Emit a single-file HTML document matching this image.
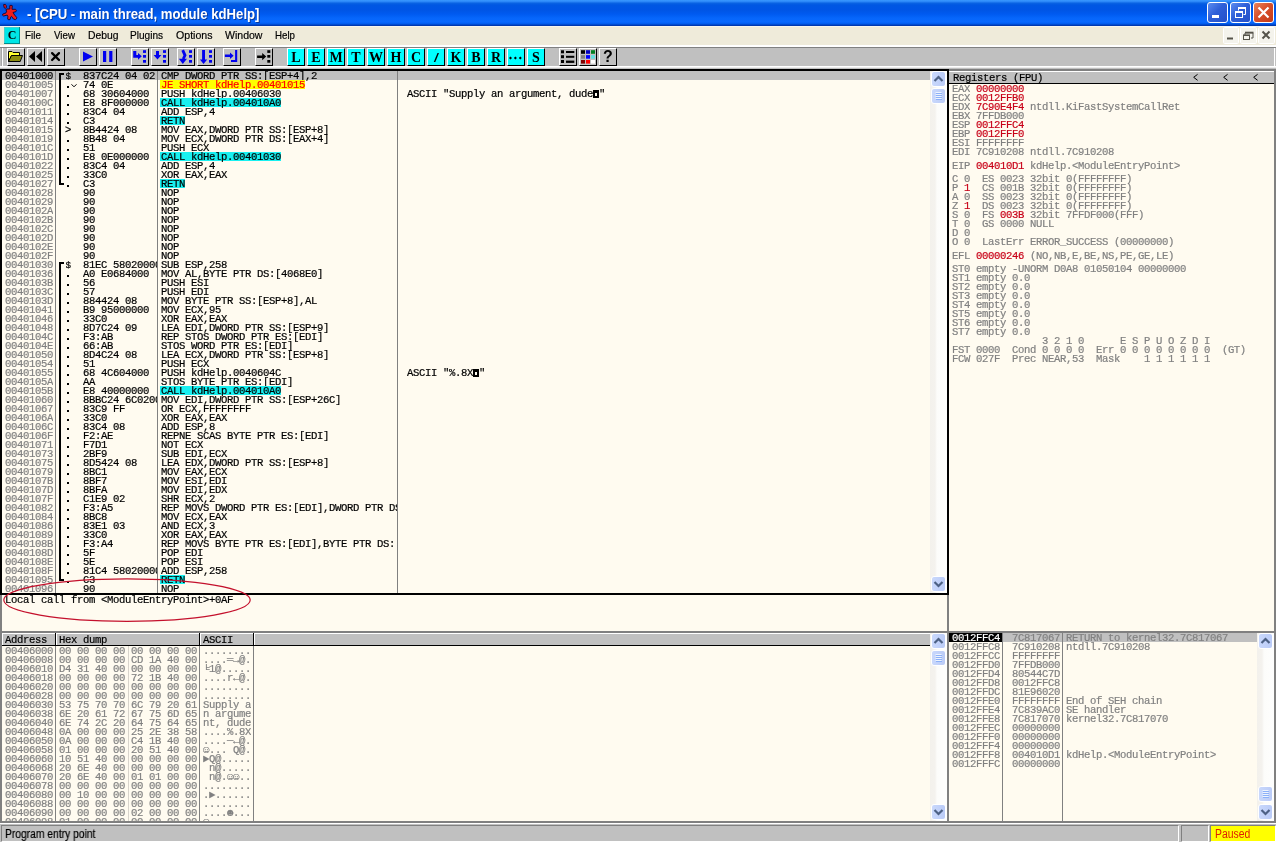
<!DOCTYPE html>
<html><head><meta charset="utf-8"><title>OllyDbg</title>
<style>
html,body{margin:0;padding:0;overflow:hidden;}
body{width:1276px;height:842px;overflow:hidden;background:#FFFBF0;position:relative;font-family:"Liberation Sans",sans-serif;}
.a{position:absolute;}
.m{position:absolute;font-family:"Liberation Mono",monospace;font-size:10.6px;letter-spacing:-0.36px;line-height:11px;height:11px;white-space:pre;color:#000;overflow:hidden;-webkit-text-stroke:0.2px;}
.g{color:#808080;}
.rd{color:#C80018;}
.tbb{position:absolute;top:48px;width:16px;height:16px;background:#C0C0C0;border:1px solid;border-color:#fff #000 #000 #fff;}
.tbc{background:#00FFFF;font-family:"Liberation Serif",serif;font-weight:bold;font-size:14px;line-height:18px;text-align:center;color:#000;overflow:hidden;}
.mi{position:absolute;top:28px;font-size:11px;line-height:14px;color:#000;white-space:pre;transform-origin:0 0;-webkit-text-stroke:0.2px;}
.sb{position:absolute;width:17px;background:linear-gradient(to right,#F3F1EC 0,#F4F2EE 5px,#FCFCFA 7px,#FEFEFD 17px);}
.sbb{position:absolute;left:1px;width:13px;height:14px;border:1px solid #fff;border-radius:3px;background:linear-gradient(to right,#C9D8FC,#BACBF7);overflow:hidden;}
</style></head><body><div id="root" style="position:absolute;left:0;top:0;width:1276px;height:842px;will-change:transform;">

<div class="a" style="left:0;top:0;width:1276px;height:26px;background:linear-gradient(to bottom,#3A99FF 0px,#2C88F8 1.5px,#0A63E3 3.2px,#0057E3 5px,#0055E5 10px,#005AF0 14px,#0666FB 18px,#0868FF 22px,#0059EA 24px,#0038B0 25.2px,#0038B0 26px);"></div>
<svg class="a" style="left:0;top:0" width="20" height="23" viewBox="0 0 20 23">
<g fill="#F01C1C" stroke="#1C0838" stroke-width="1" stroke-linejoin="round">
<path d="M3.6 4.6 Q5.4 3.8 6.2 5.4 L6.4 7.6 Q5.4 8.8 4.2 7.8 Z"/>
<path d="M9.8 5.6 Q11 4.8 12.3 5.7 L12 9.3 L15.6 9.3 Q17 10.2 16 11.6 L13 12.5 L14.6 15 L16.7 17.4 Q17 19.2 15.4 19.6 L13.4 19 L11.5 16.3 L10.6 17.2 L10.2 19.4 Q9 20.4 7.7 19.2 L7.9 16.2 L7.2 15.1 L3.6 16 Q1.8 15.4 2.8 14 L6 12.9 L6.6 11.2 L5.9 9.7 L7 9 L9.8 9 Z"/>
</g></svg>
<div class="a" style="left:27px;top:4.6px;font-weight:bold;font-size:14.5px;line-height:18px;color:#fff;white-space:pre;text-shadow:1px 1px 0 #0A3A9C;transform-origin:0 0;transform:scaleX(0.9075);" id="ttl">- [CPU - main thread, module kdHelp]</div>
<div class="a" style="left:1207px;top:2px;width:19px;height:19px;border:1px solid #fff;border-radius:3px;background:linear-gradient(135deg,#5C8CF0 0%,#2E5FD8 45%,#2450C8 100%);"></div><div class="a" style="left:1212px;top:15px;width:7px;height:3px;background:#fff;"></div>
<div class="a" style="left:1230px;top:2px;width:19px;height:19px;border:1px solid #fff;border-radius:3px;background:linear-gradient(135deg,#5C8CF0 0%,#2E5FD8 45%,#2450C8 100%);"></div><svg class="a" style="left:1230px;top:2px" width="21" height="21"><path d="M8.5 8.5 V6.5 H15.5 V12.5 H13.5" fill="none" stroke="#fff" stroke-width="1"/><path d="M8 6 H16" stroke="#fff" stroke-width="2"/><rect x="5.5" y="10.5" width="7" height="5" fill="none" stroke="#fff" stroke-width="1"/><path d="M5 10 H13" stroke="#fff" stroke-width="2"/></svg>
<div class="a" style="left:1253px;top:2px;width:19px;height:19px;border:1px solid #fff;border-radius:3px;background:linear-gradient(135deg,#E8845C 0%,#D8502C 45%,#C23A18 100%);"></div><svg class="a" style="left:1253px;top:2px" width="21" height="21"><path d="M5.5 5.5 L15.5 15.5 M15.5 5.5 L5.5 15.5" stroke="#fff" stroke-width="2.2"/></svg>
<div class="a" style="left:0;top:26px;width:1276px;height:21px;background:#EFEBDA;"></div>
<div class="a" style="left:0px;top:26px;width:1276px;height:1px;background:#F6F5EE"></div>
<div class="a" style="left:0px;top:45px;width:1276px;height:2px;background:#FFFFFF"></div>
<div class="a" style="left:4px;top:27px;width:15px;height:16px;background:#00E6E6;border:solid #008C8C;border-width:0 1px 1px 0;box-shadow:inset 1px 1px 0 #40d0d0;"></div>
<div class="a" style="left:4px;top:27px;width:16px;height:17px;font-family:'Liberation Serif',serif;font-weight:bold;font-size:12px;line-height:17px;text-align:center;color:#000;">C</div>
<div class="mi" style="left:25px;transform:scaleX(0.902)">File</div>
<div class="mi" style="left:54px;transform:scaleX(0.888)">View</div>
<div class="mi" style="left:88px;transform:scaleX(0.941)">Debug</div>
<div class="mi" style="left:130px;transform:scaleX(0.915)">Plugins</div>
<div class="mi" style="left:175.5px;transform:scaleX(0.963)">Options</div>
<div class="mi" style="left:224.5px;transform:scaleX(0.958)">Window</div>
<div class="mi" style="left:274.5px;transform:scaleX(0.884)">Help</div>
<svg class="a" style="left:1222px;top:27px" width="54" height="18">
<g fill="#F4F3EC" stroke="#fff" stroke-width="1"><rect x="1.5" y="0.5" width="15" height="16" rx="1"/><rect x="18.5" y="0.5" width="16" height="16" rx="1"/><rect x="36.5" y="0.5" width="16" height="16" rx="1"/></g>
<path d="M5 11.5 H11" stroke="#55534A" stroke-width="2"/>
<path d="M23 8 V6 H31 V11 H29" fill="none" stroke="#55534A" stroke-width="1"/><path d="M23 5.5 H31.5" stroke="#55534A" stroke-width="1.6"/>
<rect x="21.5" y="8.5" width="6" height="4" fill="none" stroke="#55534A" stroke-width="1"/><path d="M21 8.2 H28" stroke="#55534A" stroke-width="1.6"/>
<path d="M40.5 4.5 L47.5 11.5 M47.5 4.5 L40.5 11.5" stroke="#55534A" stroke-width="2"/>
</svg>
<div class="a" style="left:0;top:47px;width:1276px;height:22px;background:#C0C0C0;"></div>
<div class="a" style="left:0px;top:47px;width:1276px;height:1px;background:#808080"></div>
<div class="a" style="left:1px;top:48px;width:1px;height:18px;background:#A8A8A8"></div>
<div class="a" style="left:2px;top:48px;width:1px;height:18px;background:#FFFFFF"></div>
<div class="a" style="left:1274px;top:48px;width:1px;height:18px;background:#fff"></div>
<div class="a" style="left:0px;top:66px;width:1276px;height:1px;background:#fff"></div>
<div class="a" style="left:0px;top:67px;width:1276px;height:1px;background:#ECECEC"></div>
<div class="tbb " style="left:7px"><svg width="16" height="16" viewBox="0 0 16 16" style="display:block"><path d="M0.5 2.5 H4 L5 3.5 H11.5 V6.5 H3.5 L0.5 12.5 Z" fill="#FFFF30" stroke="#000" stroke-width="1"/><path d="M0.5 12.5 L3.5 6.5 H14.5 L12.2 12.5 Z" fill="#8C8C10" stroke="#000" stroke-width="1"/></svg></div>
<div class="tbb " style="left:27px"><svg width="16" height="16" viewBox="0 0 16 16" style="display:block"><path d="M7 2 V13 L1 7.5 Z M14 2 V13 L8 7.5 Z" fill="#000"/></svg></div>
<div class="tbb " style="left:47px"><svg width="16" height="16" viewBox="0 0 16 16" style="display:block"><path d="M4.1 4.1 L11 11 M11 4.1 L4.1 11" stroke="#000" stroke-width="2.3" stroke-linecap="round"/></svg></div>
<div class="tbb " style="left:79px"><svg width="16" height="16" viewBox="0 0 16 16" style="display:block"><path d="M3 2.5 L13 7.5 L3 12.5 Z" fill="#0000F0"/></svg></div>
<div class="tbb " style="left:99px"><svg width="16" height="16" viewBox="0 0 16 16" style="display:block"><rect x="3" y="2" width="3.2" height="11" fill="#0000F0"/><rect x="9.2" y="2" width="3.2" height="11" fill="#0000F0"/></svg></div>
<div class="tbb " style="left:131px"><svg width="16" height="16" viewBox="0 0 16 16" style="display:block"><path d="M1.2 2 H4.3 V6 H6 V4 L9.8 7.35 L6 10.7 V8.7 H1.2 Z" fill="#0000F0"/><rect x="11" y="1.2" width="3" height="2.7" fill="#0000F0"/><rect x="11" y="6" width="3" height="2.7" fill="#0000F0"/><rect x="11" y="11" width="3" height="2.7" fill="#0000F0"/></svg></div>
<div class="tbb " style="left:151px"><svg width="16" height="16" viewBox="0 0 16 16" style="display:block"><path d="M4 2 H7 V6 H9.4 L5.5 10.4 L1.6 6 H4 Z" fill="#0000F0"/><rect x="11" y="1.2" width="3" height="2.7" fill="#0000F0"/><rect x="11" y="6" width="3" height="2.7" fill="#0000F0"/><rect x="11" y="11" width="3" height="2.7" fill="#0000F0"/></svg></div>
<div class="tbb " style="left:177px"><svg width="16" height="16" viewBox="0 0 16 16" style="display:block"><path d="M4.7 1.2 L7 6.3 L5.2 10" fill="none" stroke="#0000F0" stroke-width="2.8"/><path d="M0.9 9.8 H9 L4.8 15 Z" fill="#0000F0"/><rect x="11" y="1.2" width="3" height="2.7" fill="#0000F0"/><rect x="11" y="6" width="3" height="2.7" fill="#0000F0"/><rect x="11" y="11" width="3" height="2.7" fill="#0000F0"/></svg></div>
<div class="tbb " style="left:197px"><svg width="16" height="16" viewBox="0 0 16 16" style="display:block"><path d="M4.1 1.1 H7 V10.6 H9.2 L5.55 15 L1.9 10.6 H4.1 Z" fill="#0000F0"/><rect x="11" y="1.2" width="3" height="2.7" fill="#0000F0"/><rect x="11" y="6" width="3" height="2.7" fill="#0000F0"/><rect x="11" y="11" width="3" height="2.7" fill="#0000F0"/></svg></div>
<div class="tbb " style="left:223px"><svg width="16" height="16" viewBox="0 0 16 16" style="display:block"><path d="M0.9 5.6 H6 V3.5 L9.6 6.8 L6 10.1 V8 H0.9 Z" fill="#0000F0"/><path d="M11.1 1.1 H13.2 V12.9 H7 V10.9 H11.1 Z" fill="#0000F0"/></svg></div>
<div class="tbb " style="left:255px"><svg width="16" height="16" viewBox="0 0 16 16" style="display:block"><path d="M1.1 6.4 H6.2 V4 L10.2 7.6 L6.2 11.2 V8.9 H1.1 Z" fill="#000"/><rect x="11.3" y="1.2" width="3" height="2.7" fill="#000"/><rect x="11.3" y="6" width="3" height="2.7" fill="#000"/><rect x="11.3" y="11" width="3" height="2.7" fill="#000"/></svg></div>
<div class="tbb tbc" style="left:287px"><span>L</span></div>
<div class="tbb tbc" style="left:307px"><span>E</span></div>
<div class="tbb tbc" style="left:327px"><span>M</span></div>
<div class="tbb tbc" style="left:347px"><span>T</span></div>
<div class="tbb tbc" style="left:367px"><span>W</span></div>
<div class="tbb tbc" style="left:387px"><span>H</span></div>
<div class="tbb tbc" style="left:407px"><span>C</span></div>
<div class="tbb tbc" style="left:427px"><span><i style="font-size:13px;font-family:Liberation Sans;font-weight:bold">/</i></span></div>
<div class="tbb tbc" style="left:447px"><span>K</span></div>
<div class="tbb tbc" style="left:467px"><span>B</span></div>
<div class="tbb tbc" style="left:487px"><span>R</span></div>
<div class="tbb tbc" style="left:507px"><svg width="16" height="16" viewBox="0 0 16 16" style="display:block"><g fill="#000"><path d="M2.5 7.5 L4 9 L2.5 10.5 L1 9 Z M7.4 7.5 L8.9 9 L7.4 10.5 L5.9 9 Z M12.3 7.5 L13.8 9 L12.3 10.5 L10.8 9 Z"/></g></svg></div>
<div class="tbb tbc" style="left:527px"><span>S</span></div>
<div class="tbb " style="left:559px"><svg width="16" height="16" viewBox="0 0 16 16" style="display:block"><g fill="#000"><rect x="1" y="1.3" width="3" height="3"/><rect x="1" y="6.2" width="3" height="3"/><rect x="1" y="11" width="3" height="3"/><rect x="6" y="2" width="8.3" height="2"/><rect x="6" y="6.8" width="8.3" height="2"/><rect x="6" y="11.6" width="8.3" height="2.3"/></g></svg></div>
<div class="tbb " style="left:579px"><svg width="16" height="16" viewBox="0 0 16 16" style="display:block"><rect x="1" y="1.2" width="4" height="3.6" fill="#000"/><rect x="6" y="1.2" width="4" height="3.6" fill="#0000C0"/><rect x="11" y="1.2" width="4" height="3.6" fill="#008020"/><rect x="1" y="6.1" width="4" height="3.6" fill="#808080"/><rect x="6" y="6.1" width="4" height="3.6" fill="#0000FF"/><rect x="11" y="6.1" width="4" height="3.6" fill="#60E0E0"/><rect x="1" y="11" width="4" height="3.6" fill="#800000"/><rect x="6" y="11" width="4" height="3.6" fill="#FF0000"/><rect x="11" y="11" width="4" height="3.6" fill="#fff"/></svg></div>
<div class="tbb " style="left:599px"><div style="font-weight:bold;font-size:16px;line-height:16px;text-align:center;color:#000">?</div></div>
<div class="a" style="left:0px;top:69px;width:949px;height:526px;background:#000"></div>
<div class="a" style="left:2px;top:71px;width:945px;height:522px;background:#FFFBF0"></div>
<div class="a" style="left:2px;top:71px;width:928px;height:9px;background:#C0C0C0"></div>
<div class="m " style="left:5px;top:71px;">00401000</div>
<div class="m " style="left:65.5px;top:71px;font-size:9.2px;letter-spacing:0;">$</div>
<div class="m " style="left:83px;top:71px;width:74px;">837C24 04 02</div>
<div class="m " style="left:161px;top:71px;width:236px;">CMP DWORD PTR SS:[ESP+4],2</div>
<div class="m g" style="left:5px;top:80px;">00401005</div>
<div class="a" style="left:67px;top:86px;width:2px;height:2px;background:#000"></div>
<svg class="a" style="left:71px;top:80px" width="6" height="9"><path d="M0.5 4.3 L3 6.8 L5.5 4.3" fill="none" stroke="#000" stroke-width="1"/></svg>
<div class="m " style="left:83px;top:80px;width:74px;">74 0E</div>
<div class="a" style="left:160px;top:80px;width:145px;height:9px;background:#FFFF00"></div>
<div class="m " style="left:161px;top:80px;width:236px;color:#FF0000;">JE SHORT kdHelp.00401015</div>
<div class="m g" style="left:5px;top:89px;">00401007</div>
<div class="a" style="left:67px;top:95px;width:2px;height:2px;background:#000"></div>
<div class="m " style="left:83px;top:89px;width:74px;">68 30604000</div>
<div class="m " style="left:161px;top:89px;width:236px;">PUSH kdHelp.00406030</div>
<div class="m " style="left:407px;top:89px;">ASCII &quot;Supply an argument, dude &quot;</div>
<div class="a" style="left:593px;top:90px;width:6px;height:8px;background:#000"></div>
<div class="a" style="left:595px;top:93px;width:2px;height:3px;background:#FFFBF0"></div>
<div class="m g" style="left:5px;top:98px;">0040100C</div>
<div class="a" style="left:67px;top:104px;width:2px;height:2px;background:#000"></div>
<div class="m " style="left:83px;top:98px;width:74px;">E8 8F000000</div>
<div class="a" style="left:160px;top:98px;width:121px;height:9px;background:#18F0F0"></div>
<div class="m " style="left:161px;top:98px;width:236px;">CALL kdHelp.004010A0</div>
<div class="m g" style="left:5px;top:107px;">00401011</div>
<div class="a" style="left:67px;top:113px;width:2px;height:2px;background:#000"></div>
<div class="m " style="left:83px;top:107px;width:74px;">83C4 04</div>
<div class="m " style="left:161px;top:107px;width:236px;">ADD ESP,4</div>
<div class="m g" style="left:5px;top:116px;">00401014</div>
<div class="a" style="left:67px;top:122px;width:2px;height:2px;background:#000"></div>
<div class="m " style="left:83px;top:116px;width:74px;">C3</div>
<div class="a" style="left:160px;top:116px;width:25px;height:9px;background:#18F0F0"></div>
<div class="m " style="left:161px;top:116px;width:236px;">RETN</div>
<div class="m g" style="left:5px;top:125px;">00401015</div>
<div class="m " style="left:65px;top:125px;">&gt;</div>
<div class="m " style="left:83px;top:125px;width:74px;">8B4424 08</div>
<div class="m " style="left:161px;top:125px;width:236px;">MOV EAX,DWORD PTR SS:[ESP+8]</div>
<div class="m g" style="left:5px;top:134px;">00401019</div>
<div class="a" style="left:67px;top:140px;width:2px;height:2px;background:#000"></div>
<div class="m " style="left:83px;top:134px;width:74px;">8B48 04</div>
<div class="m " style="left:161px;top:134px;width:236px;">MOV ECX,DWORD PTR DS:[EAX+4]</div>
<div class="m g" style="left:5px;top:143px;">0040101C</div>
<div class="a" style="left:67px;top:149px;width:2px;height:2px;background:#000"></div>
<div class="m " style="left:83px;top:143px;width:74px;">51</div>
<div class="m " style="left:161px;top:143px;width:236px;">PUSH ECX</div>
<div class="m g" style="left:5px;top:152px;">0040101D</div>
<div class="a" style="left:67px;top:158px;width:2px;height:2px;background:#000"></div>
<div class="m " style="left:83px;top:152px;width:74px;">E8 0E000000</div>
<div class="a" style="left:160px;top:152px;width:121px;height:9px;background:#18F0F0"></div>
<div class="m " style="left:161px;top:152px;width:236px;">CALL kdHelp.00401030</div>
<div class="m g" style="left:5px;top:161px;">00401022</div>
<div class="a" style="left:67px;top:167px;width:2px;height:2px;background:#000"></div>
<div class="m " style="left:83px;top:161px;width:74px;">83C4 04</div>
<div class="m " style="left:161px;top:161px;width:236px;">ADD ESP,4</div>
<div class="m g" style="left:5px;top:170px;">00401025</div>
<div class="a" style="left:67px;top:176px;width:2px;height:2px;background:#000"></div>
<div class="m " style="left:83px;top:170px;width:74px;">33C0</div>
<div class="m " style="left:161px;top:170px;width:236px;">XOR EAX,EAX</div>
<div class="m g" style="left:5px;top:179px;">00401027</div>
<div class="a" style="left:67px;top:185px;width:2px;height:2px;background:#000"></div>
<div class="m " style="left:83px;top:179px;width:74px;">C3</div>
<div class="a" style="left:160px;top:179px;width:25px;height:9px;background:#18F0F0"></div>
<div class="m " style="left:161px;top:179px;width:236px;">RETN</div>
<div class="m g" style="left:5px;top:188px;">00401028</div>
<div class="m " style="left:83px;top:188px;width:74px;">90</div>
<div class="m " style="left:161px;top:188px;width:236px;">NOP</div>
<div class="m g" style="left:5px;top:197px;">00401029</div>
<div class="m " style="left:83px;top:197px;width:74px;">90</div>
<div class="m " style="left:161px;top:197px;width:236px;">NOP</div>
<div class="m g" style="left:5px;top:206px;">0040102A</div>
<div class="m " style="left:83px;top:206px;width:74px;">90</div>
<div class="m " style="left:161px;top:206px;width:236px;">NOP</div>
<div class="m g" style="left:5px;top:215px;">0040102B</div>
<div class="m " style="left:83px;top:215px;width:74px;">90</div>
<div class="m " style="left:161px;top:215px;width:236px;">NOP</div>
<div class="m g" style="left:5px;top:224px;">0040102C</div>
<div class="m " style="left:83px;top:224px;width:74px;">90</div>
<div class="m " style="left:161px;top:224px;width:236px;">NOP</div>
<div class="m g" style="left:5px;top:233px;">0040102D</div>
<div class="m " style="left:83px;top:233px;width:74px;">90</div>
<div class="m " style="left:161px;top:233px;width:236px;">NOP</div>
<div class="m g" style="left:5px;top:242px;">0040102E</div>
<div class="m " style="left:83px;top:242px;width:74px;">90</div>
<div class="m " style="left:161px;top:242px;width:236px;">NOP</div>
<div class="m g" style="left:5px;top:251px;">0040102F</div>
<div class="m " style="left:83px;top:251px;width:74px;">90</div>
<div class="m " style="left:161px;top:251px;width:236px;">NOP</div>
<div class="m g" style="left:5px;top:260px;">00401030</div>
<div class="m " style="left:65.5px;top:260px;font-size:9.2px;letter-spacing:0;">$</div>
<div class="m " style="left:83px;top:260px;width:74px;">81EC 58020000</div>
<div class="m " style="left:161px;top:260px;width:236px;">SUB ESP,258</div>
<div class="m g" style="left:5px;top:269px;">00401036</div>
<div class="a" style="left:67px;top:275px;width:2px;height:2px;background:#000"></div>
<div class="m " style="left:83px;top:269px;width:74px;">A0 E0684000</div>
<div class="m " style="left:161px;top:269px;width:236px;">MOV AL,BYTE PTR DS:[4068E0]</div>
<div class="m g" style="left:5px;top:278px;">0040103B</div>
<div class="a" style="left:67px;top:284px;width:2px;height:2px;background:#000"></div>
<div class="m " style="left:83px;top:278px;width:74px;">56</div>
<div class="m " style="left:161px;top:278px;width:236px;">PUSH ESI</div>
<div class="m g" style="left:5px;top:287px;">0040103C</div>
<div class="a" style="left:67px;top:293px;width:2px;height:2px;background:#000"></div>
<div class="m " style="left:83px;top:287px;width:74px;">57</div>
<div class="m " style="left:161px;top:287px;width:236px;">PUSH EDI</div>
<div class="m g" style="left:5px;top:296px;">0040103D</div>
<div class="a" style="left:67px;top:302px;width:2px;height:2px;background:#000"></div>
<div class="m " style="left:83px;top:296px;width:74px;">884424 08</div>
<div class="m " style="left:161px;top:296px;width:236px;">MOV BYTE PTR SS:[ESP+8],AL</div>
<div class="m g" style="left:5px;top:305px;">00401041</div>
<div class="a" style="left:67px;top:311px;width:2px;height:2px;background:#000"></div>
<div class="m " style="left:83px;top:305px;width:74px;">B9 95000000</div>
<div class="m " style="left:161px;top:305px;width:236px;">MOV ECX,95</div>
<div class="m g" style="left:5px;top:314px;">00401046</div>
<div class="a" style="left:67px;top:320px;width:2px;height:2px;background:#000"></div>
<div class="m " style="left:83px;top:314px;width:74px;">33C0</div>
<div class="m " style="left:161px;top:314px;width:236px;">XOR EAX,EAX</div>
<div class="m g" style="left:5px;top:323px;">00401048</div>
<div class="a" style="left:67px;top:329px;width:2px;height:2px;background:#000"></div>
<div class="m " style="left:83px;top:323px;width:74px;">8D7C24 09</div>
<div class="m " style="left:161px;top:323px;width:236px;">LEA EDI,DWORD PTR SS:[ESP+9]</div>
<div class="m g" style="left:5px;top:332px;">0040104C</div>
<div class="a" style="left:67px;top:338px;width:2px;height:2px;background:#000"></div>
<div class="m " style="left:83px;top:332px;width:74px;">F3:AB</div>
<div class="m " style="left:161px;top:332px;width:236px;">REP STOS DWORD PTR ES:[EDI]</div>
<div class="m g" style="left:5px;top:341px;">0040104E</div>
<div class="a" style="left:67px;top:347px;width:2px;height:2px;background:#000"></div>
<div class="m " style="left:83px;top:341px;width:74px;">66:AB</div>
<div class="m " style="left:161px;top:341px;width:236px;">STOS WORD PTR ES:[EDI]</div>
<div class="m g" style="left:5px;top:350px;">00401050</div>
<div class="a" style="left:67px;top:356px;width:2px;height:2px;background:#000"></div>
<div class="m " style="left:83px;top:350px;width:74px;">8D4C24 08</div>
<div class="m " style="left:161px;top:350px;width:236px;">LEA ECX,DWORD PTR SS:[ESP+8]</div>
<div class="m g" style="left:5px;top:359px;">00401054</div>
<div class="a" style="left:67px;top:365px;width:2px;height:2px;background:#000"></div>
<div class="m " style="left:83px;top:359px;width:74px;">51</div>
<div class="m " style="left:161px;top:359px;width:236px;">PUSH ECX</div>
<div class="m g" style="left:5px;top:368px;">00401055</div>
<div class="a" style="left:67px;top:374px;width:2px;height:2px;background:#000"></div>
<div class="m " style="left:83px;top:368px;width:74px;">68 4C604000</div>
<div class="m " style="left:161px;top:368px;width:236px;">PUSH kdHelp.0040604C</div>
<div class="m " style="left:407px;top:368px;">ASCII &quot;%.8X &quot;</div>
<div class="a" style="left:473px;top:369px;width:6px;height:8px;background:#000"></div>
<div class="a" style="left:475px;top:372px;width:2px;height:3px;background:#FFFBF0"></div>
<div class="m g" style="left:5px;top:377px;">0040105A</div>
<div class="a" style="left:67px;top:383px;width:2px;height:2px;background:#000"></div>
<div class="m " style="left:83px;top:377px;width:74px;">AA</div>
<div class="m " style="left:161px;top:377px;width:236px;">STOS BYTE PTR ES:[EDI]</div>
<div class="m g" style="left:5px;top:386px;">0040105B</div>
<div class="a" style="left:67px;top:392px;width:2px;height:2px;background:#000"></div>
<div class="m " style="left:83px;top:386px;width:74px;">E8 40000000</div>
<div class="a" style="left:160px;top:386px;width:121px;height:9px;background:#18F0F0"></div>
<div class="m " style="left:161px;top:386px;width:236px;">CALL kdHelp.004010A0</div>
<div class="m g" style="left:5px;top:395px;">00401060</div>
<div class="a" style="left:67px;top:401px;width:2px;height:2px;background:#000"></div>
<div class="m " style="left:83px;top:395px;width:74px;">8BBC24 6C020000</div>
<div class="m " style="left:161px;top:395px;width:236px;">MOV EDI,DWORD PTR SS:[ESP+26C]</div>
<div class="m g" style="left:5px;top:404px;">00401067</div>
<div class="a" style="left:67px;top:410px;width:2px;height:2px;background:#000"></div>
<div class="m " style="left:83px;top:404px;width:74px;">83C9 FF</div>
<div class="m " style="left:161px;top:404px;width:236px;">OR ECX,FFFFFFFF</div>
<div class="m g" style="left:5px;top:413px;">0040106A</div>
<div class="a" style="left:67px;top:419px;width:2px;height:2px;background:#000"></div>
<div class="m " style="left:83px;top:413px;width:74px;">33C0</div>
<div class="m " style="left:161px;top:413px;width:236px;">XOR EAX,EAX</div>
<div class="m g" style="left:5px;top:422px;">0040106C</div>
<div class="a" style="left:67px;top:428px;width:2px;height:2px;background:#000"></div>
<div class="m " style="left:83px;top:422px;width:74px;">83C4 08</div>
<div class="m " style="left:161px;top:422px;width:236px;">ADD ESP,8</div>
<div class="m g" style="left:5px;top:431px;">0040106F</div>
<div class="a" style="left:67px;top:437px;width:2px;height:2px;background:#000"></div>
<div class="m " style="left:83px;top:431px;width:74px;">F2:AE</div>
<div class="m " style="left:161px;top:431px;width:236px;">REPNE SCAS BYTE PTR ES:[EDI]</div>
<div class="m g" style="left:5px;top:440px;">00401071</div>
<div class="a" style="left:67px;top:446px;width:2px;height:2px;background:#000"></div>
<div class="m " style="left:83px;top:440px;width:74px;">F7D1</div>
<div class="m " style="left:161px;top:440px;width:236px;">NOT ECX</div>
<div class="m g" style="left:5px;top:449px;">00401073</div>
<div class="a" style="left:67px;top:455px;width:2px;height:2px;background:#000"></div>
<div class="m " style="left:83px;top:449px;width:74px;">2BF9</div>
<div class="m " style="left:161px;top:449px;width:236px;">SUB EDI,ECX</div>
<div class="m g" style="left:5px;top:458px;">00401075</div>
<div class="a" style="left:67px;top:464px;width:2px;height:2px;background:#000"></div>
<div class="m " style="left:83px;top:458px;width:74px;">8D5424 08</div>
<div class="m " style="left:161px;top:458px;width:236px;">LEA EDX,DWORD PTR SS:[ESP+8]</div>
<div class="m g" style="left:5px;top:467px;">00401079</div>
<div class="a" style="left:67px;top:473px;width:2px;height:2px;background:#000"></div>
<div class="m " style="left:83px;top:467px;width:74px;">8BC1</div>
<div class="m " style="left:161px;top:467px;width:236px;">MOV EAX,ECX</div>
<div class="m g" style="left:5px;top:476px;">0040107B</div>
<div class="a" style="left:67px;top:482px;width:2px;height:2px;background:#000"></div>
<div class="m " style="left:83px;top:476px;width:74px;">8BF7</div>
<div class="m " style="left:161px;top:476px;width:236px;">MOV ESI,EDI</div>
<div class="m g" style="left:5px;top:485px;">0040107D</div>
<div class="a" style="left:67px;top:491px;width:2px;height:2px;background:#000"></div>
<div class="m " style="left:83px;top:485px;width:74px;">8BFA</div>
<div class="m " style="left:161px;top:485px;width:236px;">MOV EDI,EDX</div>
<div class="m g" style="left:5px;top:494px;">0040107F</div>
<div class="a" style="left:67px;top:500px;width:2px;height:2px;background:#000"></div>
<div class="m " style="left:83px;top:494px;width:74px;">C1E9 02</div>
<div class="m " style="left:161px;top:494px;width:236px;">SHR ECX,2</div>
<div class="m g" style="left:5px;top:503px;">00401082</div>
<div class="a" style="left:67px;top:509px;width:2px;height:2px;background:#000"></div>
<div class="m " style="left:83px;top:503px;width:74px;">F3:A5</div>
<div class="m " style="left:161px;top:503px;width:236px;">REP MOVS DWORD PTR ES:[EDI],DWORD PTR DS:[ESI]</div>
<div class="m g" style="left:5px;top:512px;">00401084</div>
<div class="a" style="left:67px;top:518px;width:2px;height:2px;background:#000"></div>
<div class="m " style="left:83px;top:512px;width:74px;">8BC8</div>
<div class="m " style="left:161px;top:512px;width:236px;">MOV ECX,EAX</div>
<div class="m g" style="left:5px;top:521px;">00401086</div>
<div class="a" style="left:67px;top:527px;width:2px;height:2px;background:#000"></div>
<div class="m " style="left:83px;top:521px;width:74px;">83E1 03</div>
<div class="m " style="left:161px;top:521px;width:236px;">AND ECX,3</div>
<div class="m g" style="left:5px;top:530px;">00401089</div>
<div class="a" style="left:67px;top:536px;width:2px;height:2px;background:#000"></div>
<div class="m " style="left:83px;top:530px;width:74px;">33C0</div>
<div class="m " style="left:161px;top:530px;width:236px;">XOR EAX,EAX</div>
<div class="m g" style="left:5px;top:539px;">0040108B</div>
<div class="a" style="left:67px;top:545px;width:2px;height:2px;background:#000"></div>
<div class="m " style="left:83px;top:539px;width:74px;">F3:A4</div>
<div class="m " style="left:161px;top:539px;width:236px;">REP MOVS BYTE PTR ES:[EDI],BYTE PTR DS:[ESI]</div>
<div class="m g" style="left:5px;top:548px;">0040108D</div>
<div class="a" style="left:67px;top:554px;width:2px;height:2px;background:#000"></div>
<div class="m " style="left:83px;top:548px;width:74px;">5F</div>
<div class="m " style="left:161px;top:548px;width:236px;">POP EDI</div>
<div class="m g" style="left:5px;top:557px;">0040108E</div>
<div class="a" style="left:67px;top:563px;width:2px;height:2px;background:#000"></div>
<div class="m " style="left:83px;top:557px;width:74px;">5E</div>
<div class="m " style="left:161px;top:557px;width:236px;">POP ESI</div>
<div class="m g" style="left:5px;top:566px;">0040108F</div>
<div class="a" style="left:67px;top:572px;width:2px;height:2px;background:#000"></div>
<div class="m " style="left:83px;top:566px;width:74px;">81C4 58020000</div>
<div class="m " style="left:161px;top:566px;width:236px;">ADD ESP,258</div>
<div class="m g" style="left:5px;top:575px;">00401095</div>
<div class="a" style="left:67px;top:581px;width:2px;height:2px;background:#000"></div>
<div class="m " style="left:83px;top:575px;width:74px;">C3</div>
<div class="a" style="left:160px;top:575px;width:25px;height:9px;background:#18F0F0"></div>
<div class="m " style="left:161px;top:575px;width:236px;">RETN</div>
<div class="m g" style="left:5px;top:584px;">00401096</div>
<div class="m " style="left:83px;top:584px;width:74px;">90</div>
<div class="m " style="left:161px;top:584px;width:236px;">NOP</div>
<div class="a" style="left:55px;top:71px;width:1px;height:522px;background:#808080"></div>
<div class="a" style="left:157px;top:71px;width:1px;height:522px;background:#808080"></div>
<div class="a" style="left:397px;top:71px;width:1px;height:522px;background:#808080"></div>
<div class="a" style="left:59px;top:73px;width:2px;height:112px;background:#000"></div>
<div class="a" style="left:59px;top:73px;width:5px;height:2px;background:#000"></div>
<div class="a" style="left:59px;top:183px;width:5px;height:2px;background:#000"></div>
<div class="a" style="left:59px;top:262px;width:2px;height:319px;background:#000"></div>
<div class="a" style="left:59px;top:262px;width:5px;height:2px;background:#000"></div>
<div class="a" style="left:59px;top:579px;width:5px;height:2px;background:#000"></div>
<div class="sb" style="left:930px;top:71px;height:522px"><div class="sbb" style="top:0"><svg width="13" height="14" style="display:block"><path d="M2.5 9 L6.5 5 L10.5 9" fill="none" stroke="#4D6185" stroke-width="2.2"/></svg></div><div class="sbb" style="top:17px"><svg width="13" height="14" style="display:block"><path d="M3.5 3.5 H9.5 M3.5 5.5 H9.5 M3.5 7.5 H9.5 M3.5 9.5 H9.5" stroke="#EEF4FE" stroke-width="1"/><path d="M4 4.5 H10 M4 6.5 H10 M4 8.5 H10 M4 10.5 H10" stroke="#8CB0F8" stroke-width="1"/></svg></div><div class="sbb" style="top:505px"><svg width="13" height="14" style="display:block"><path d="M2.5 5 L6.5 9 L10.5 5" fill="none" stroke="#4D6185" stroke-width="2.2"/></svg></div></div>
<div class="a" style="left:0px;top:595px;width:2px;height:228px;background:#808080"></div>
<div class="a" style="left:947px;top:595px;width:2px;height:228px;background:#808080"></div>
<div class="m " style="left:5px;top:595px;">Local call from &lt;ModuleEntryPoint&gt;+0AF</div>
<div class="a" style="left:0px;top:631px;width:1276px;height:2px;background:#808080"></div>
<div class="a" style="left:2px;top:633px;width:928px;height:12px;background:#C0C0C0"></div>
<div class="a" style="left:2px;top:645px;width:928px;height:1px;background:#000"></div>
<div class="a" style="left:2px;top:633px;width:1px;height:12px;background:#fff"></div>
<div class="a" style="left:2px;top:633px;width:53px;height:1px;background:#fff"></div>
<div class="a" style="left:55px;top:633px;width:1px;height:13px;background:#000"></div>
<div class="m " style="left:5px;top:635px;">Address</div>
<div class="a" style="left:56px;top:633px;width:1px;height:12px;background:#fff"></div>
<div class="a" style="left:56px;top:633px;width:143px;height:1px;background:#fff"></div>
<div class="a" style="left:199px;top:633px;width:1px;height:13px;background:#000"></div>
<div class="m " style="left:59px;top:635px;">Hex dump</div>
<div class="a" style="left:200px;top:633px;width:1px;height:12px;background:#fff"></div>
<div class="a" style="left:200px;top:633px;width:53px;height:1px;background:#fff"></div>
<div class="a" style="left:253px;top:633px;width:1px;height:13px;background:#000"></div>
<div class="m " style="left:203px;top:635px;">ASCII</div>
<div class="a" style="left:254px;top:633px;width:1px;height:12px;background:#fff"></div>
<div class="a" style="left:254px;top:633px;width:676px;height:1px;background:#fff"></div>
<div class="a" style="left:930px;top:633px;width:1px;height:13px;background:#000"></div>
<div class="a" style="left:2px;top:646px;width:928px;height:175px;overflow:hidden">
<div class="m g" style="left:3px;top:0px;">00406000</div>
<div class="m g" style="left:57px;top:0px;">00 00 00 00 00 00 00 00</div>
<div class="m g" style="left:201px;top:0px;">........</div>
<div class="m g" style="left:3px;top:9px;">00406008</div>
<div class="m g" style="left:57px;top:9px;">00 00 00 00 CD 1A 40 00</div>
<div class="m g" style="left:201px;top:9px;">....═→@.</div>
<div class="m g" style="left:3px;top:18px;">00406010</div>
<div class="m g" style="left:57px;top:18px;">D4 31 40 00 00 00 00 00</div>
<div class="m g" style="left:201px;top:18px;">╘1@.....</div>
<div class="m g" style="left:3px;top:27px;">00406018</div>
<div class="m g" style="left:57px;top:27px;">00 00 00 00 72 1B 40 00</div>
<div class="m g" style="left:201px;top:27px;">....r←@.</div>
<div class="m g" style="left:3px;top:36px;">00406020</div>
<div class="m g" style="left:57px;top:36px;">00 00 00 00 00 00 00 00</div>
<div class="m g" style="left:201px;top:36px;">........</div>
<div class="m g" style="left:3px;top:45px;">00406028</div>
<div class="m g" style="left:57px;top:45px;">00 00 00 00 00 00 00 00</div>
<div class="m g" style="left:201px;top:45px;">........</div>
<div class="m g" style="left:3px;top:54px;">00406030</div>
<div class="m g" style="left:57px;top:54px;">53 75 70 70 6C 79 20 61</div>
<div class="m g" style="left:201px;top:54px;">Supply a</div>
<div class="m g" style="left:3px;top:63px;">00406038</div>
<div class="m g" style="left:57px;top:63px;">6E 20 61 72 67 75 6D 65</div>
<div class="m g" style="left:201px;top:63px;">n argume</div>
<div class="m g" style="left:3px;top:72px;">00406040</div>
<div class="m g" style="left:57px;top:72px;">6E 74 2C 20 64 75 64 65</div>
<div class="m g" style="left:201px;top:72px;">nt, dude</div>
<div class="m g" style="left:3px;top:81px;">00406048</div>
<div class="m g" style="left:57px;top:81px;">0A 00 00 00 25 2E 38 58</div>
<div class="m g" style="left:201px;top:81px;">....%.8X</div>
<div class="m g" style="left:3px;top:90px;">00406050</div>
<div class="m g" style="left:57px;top:90px;">0A 00 00 00 C4 1B 40 00</div>
<div class="m g" style="left:201px;top:90px;">....─←@.</div>
<div class="m g" style="left:3px;top:99px;">00406058</div>
<div class="m g" style="left:57px;top:99px;">01 00 00 00 20 51 40 00</div>
<div class="m g" style="left:201px;top:99px;">☺... Q@.</div>
<div class="m g" style="left:3px;top:108px;">00406060</div>
<div class="m g" style="left:57px;top:108px;">10 51 40 00 00 00 00 00</div>
<div class="m g" style="left:201px;top:108px;">►Q@.....</div>
<div class="m g" style="left:3px;top:117px;">00406068</div>
<div class="m g" style="left:57px;top:117px;">20 6E 40 00 00 00 00 00</div>
<div class="m g" style="left:201px;top:117px;"> n@.....</div>
<div class="m g" style="left:3px;top:126px;">00406070</div>
<div class="m g" style="left:57px;top:126px;">20 6E 40 00 01 01 00 00</div>
<div class="m g" style="left:201px;top:126px;"> n@.☺☺..</div>
<div class="m g" style="left:3px;top:135px;">00406078</div>
<div class="m g" style="left:57px;top:135px;">00 00 00 00 00 00 00 00</div>
<div class="m g" style="left:201px;top:135px;">........</div>
<div class="m g" style="left:3px;top:144px;">00406080</div>
<div class="m g" style="left:57px;top:144px;">00 10 00 00 00 00 00 00</div>
<div class="m g" style="left:201px;top:144px;">.►......</div>
<div class="m g" style="left:3px;top:153px;">00406088</div>
<div class="m g" style="left:57px;top:153px;">00 00 00 00 00 00 00 00</div>
<div class="m g" style="left:201px;top:153px;">........</div>
<div class="m g" style="left:3px;top:162px;">00406090</div>
<div class="m g" style="left:57px;top:162px;">00 00 00 00 02 00 00 00</div>
<div class="m g" style="left:201px;top:162px;">....☻...</div>
<div class="m g" style="left:3px;top:171px;">00406098</div>
<div class="m g" style="left:57px;top:171px;">01 00 00 00 00 00 00 00</div>
<div class="m g" style="left:201px;top:171px;">☺.......</div>
</div>
<div class="a" style="left:55px;top:646px;width:1px;height:175px;background:#808080"></div>
<div class="a" style="left:199px;top:646px;width:1px;height:175px;background:#808080"></div>
<div class="a" style="left:253px;top:646px;width:1px;height:175px;background:#808080"></div>
<div class="a" style="left:128px;top:646px;width:1px;height:175px;background:#D8D4CC"></div>
<div class="sb" style="left:930px;top:633px;height:188px"><div class="sbb" style="top:0"><svg width="13" height="14" style="display:block"><path d="M2.5 9 L6.5 5 L10.5 9" fill="none" stroke="#4D6185" stroke-width="2.2"/></svg></div><div class="sbb" style="top:17px"><svg width="13" height="14" style="display:block"><path d="M3.5 3.5 H9.5 M3.5 5.5 H9.5 M3.5 7.5 H9.5 M3.5 9.5 H9.5" stroke="#EEF4FE" stroke-width="1"/><path d="M4 4.5 H10 M4 6.5 H10 M4 8.5 H10 M4 10.5 H10" stroke="#8CB0F8" stroke-width="1"/></svg></div><div class="sbb" style="top:171px"><svg width="13" height="14" style="display:block"><path d="M2.5 5 L6.5 9 L10.5 5" fill="none" stroke="#4D6185" stroke-width="2.2"/></svg></div></div>
<div class="a" style="left:0px;top:821px;width:1276px;height:2px;background:#808080"></div>
<div class="a" style="left:949px;top:69px;width:327px;height:2px;background:#808080"></div>
<div class="a" style="left:949px;top:71px;width:325px;height:12px;background:#C0C0C0"></div>
<div class="a" style="left:949px;top:71px;width:325px;height:1px;background:#fff"></div>
<div class="a" style="left:949px;top:83px;width:325px;height:1px;background:#000"></div>
<div class="a" style="left:1274px;top:69px;width:2px;height:754px;background:#808080"></div>
<div class="m " style="left:953px;top:73px;">Registers (FPU)</div>
<svg class="a" style="left:1193px;top:72px" width="7" height="11"><path d="M4.6 2.3 L0.7 5.3 L4.6 8.3" fill="none" stroke="#000" stroke-width="1"/></svg>
<svg class="a" style="left:1223px;top:72px" width="7" height="11"><path d="M4.6 2.3 L0.7 5.3 L4.6 8.3" fill="none" stroke="#000" stroke-width="1"/></svg>
<svg class="a" style="left:1253px;top:72px" width="7" height="11"><path d="M4.6 2.3 L0.7 5.3 L4.6 8.3" fill="none" stroke="#000" stroke-width="1"/></svg>
<div class="m g" style="left:952px;top:84px;">EAX</div>
<div class="m rd" style="left:976px;top:84px;">00000000</div>
<div class="m g" style="left:952px;top:93px;">ECX</div>
<div class="m rd" style="left:976px;top:93px;">0012FFB0</div>
<div class="m g" style="left:952px;top:102px;">EDX</div>
<div class="m rd" style="left:976px;top:102px;">7C90E4F4</div>
<div class="m g" style="left:1030px;top:102px;">ntdll.KiFastSystemCallRet</div>
<div class="m g" style="left:952px;top:111px;">EBX 7FFDB000</div>
<div class="m g" style="left:952px;top:120px;">ESP</div>
<div class="m rd" style="left:976px;top:120px;">0012FFC4</div>
<div class="m g" style="left:952px;top:129px;">EBP</div>
<div class="m rd" style="left:976px;top:129px;">0012FFF0</div>
<div class="m g" style="left:952px;top:138px;">ESI FFFFFFFF</div>
<div class="m g" style="left:952px;top:147px;">EDI 7C910208 ntdll.7C910208</div>
<div class="m g" style="left:952px;top:161px;">EIP</div>
<div class="m rd" style="left:976px;top:161px;">004010D1</div>
<div class="m g" style="left:1030px;top:161px;">kdHelp.&lt;ModuleEntryPoint&gt;</div>
<div class="m g" style="left:952px;top:174px;">C 0  ES 0023 32bit 0(FFFFFFFF)</div>
<div class="m g" style="left:952px;top:183px;">P</div>
<div class="m rd" style="left:964px;top:183px;">1</div>
<div class="m g" style="left:982px;top:183px;">CS 001B 32bit 0(FFFFFFFF)</div>
<div class="m g" style="left:952px;top:192px;">A 0  SS 0023 32bit 0(FFFFFFFF)</div>
<div class="m g" style="left:952px;top:201px;">Z</div>
<div class="m rd" style="left:964px;top:201px;">1</div>
<div class="m g" style="left:982px;top:201px;">DS 0023 32bit 0(FFFFFFFF)</div>
<div class="m g" style="left:952px;top:210px;">S 0  FS</div>
<div class="m rd" style="left:1000px;top:210px;">003B</div>
<div class="m g" style="left:1030px;top:210px;">32bit 7FFDF000(FFF)</div>
<div class="m g" style="left:952px;top:219px;">T 0  GS 0000 NULL</div>
<div class="m g" style="left:952px;top:228px;">D 0</div>
<div class="m g" style="left:952px;top:237px;">O 0  LastErr ERROR_SUCCESS (00000000)</div>
<div class="m g" style="left:952px;top:251px;">EFL</div>
<div class="m rd" style="left:976px;top:251px;">00000246</div>
<div class="m g" style="left:1030px;top:251px;">(NO,NB,E,BE,NS,PE,GE,LE)</div>
<div class="m g" style="left:952px;top:264px;">ST0 empty -UNORM D0A8 01050104 00000000</div>
<div class="m g" style="left:952px;top:273px;">ST1 empty 0.0</div>
<div class="m g" style="left:952px;top:282px;">ST2 empty 0.0</div>
<div class="m g" style="left:952px;top:291px;">ST3 empty 0.0</div>
<div class="m g" style="left:952px;top:300px;">ST4 empty 0.0</div>
<div class="m g" style="left:952px;top:309px;">ST5 empty 0.0</div>
<div class="m g" style="left:952px;top:318px;">ST6 empty 0.0</div>
<div class="m g" style="left:952px;top:327px;">ST7 empty 0.0</div>
<div class="m g" style="left:1042px;top:336px;">3 2 1 0      E S P U O Z D I</div>
<div class="m g" style="left:952px;top:345px;">FST 0000  Cond 0 0 0 0  Err 0 0 0 0 0 0 0 0  (GT)</div>
<div class="m g" style="left:952px;top:354px;">FCW 027F  Prec NEAR,53  Mask    1 1 1 1 1 1</div>
<div class="a" style="left:949px;top:633px;width:54px;height:9px;background:#000"></div>
<div class="a" style="left:1003px;top:633px;width:254px;height:9px;background:#C0C0C0"></div>
<div class="m " style="left:952px;top:633px;color:#fff;">0012FFC4</div>
<div class="m g" style="left:1012px;top:633px;">7C817067</div>
<div class="m g" style="left:1066px;top:633px;">RETURN to kernel32.7C817067</div>
<div class="m g" style="left:952px;top:642px;">0012FFC8</div>
<div class="m g" style="left:1012px;top:642px;">7C910208</div>
<div class="m g" style="left:1066px;top:642px;">ntdll.7C910208</div>
<div class="m g" style="left:952px;top:651px;">0012FFCC</div>
<div class="m g" style="left:1012px;top:651px;">FFFFFFFF</div>
<div class="m g" style="left:952px;top:660px;">0012FFD0</div>
<div class="m g" style="left:1012px;top:660px;">7FFDB000</div>
<div class="m g" style="left:952px;top:669px;">0012FFD4</div>
<div class="m g" style="left:1012px;top:669px;">80544C7D</div>
<div class="m g" style="left:952px;top:678px;">0012FFD8</div>
<div class="m g" style="left:1012px;top:678px;">0012FFC8</div>
<div class="m g" style="left:952px;top:687px;">0012FFDC</div>
<div class="m g" style="left:1012px;top:687px;">81E96020</div>
<div class="m g" style="left:952px;top:696px;">0012FFE0</div>
<div class="m g" style="left:1012px;top:696px;">FFFFFFFF</div>
<div class="m g" style="left:1066px;top:696px;">End of SEH chain</div>
<div class="m g" style="left:952px;top:705px;">0012FFE4</div>
<div class="m g" style="left:1012px;top:705px;">7C839AC0</div>
<div class="m g" style="left:1066px;top:705px;">SE handler</div>
<div class="m g" style="left:952px;top:714px;">0012FFE8</div>
<div class="m g" style="left:1012px;top:714px;">7C817070</div>
<div class="m g" style="left:1066px;top:714px;">kernel32.7C817070</div>
<div class="m g" style="left:952px;top:723px;">0012FFEC</div>
<div class="m g" style="left:1012px;top:723px;">00000000</div>
<div class="m g" style="left:952px;top:732px;">0012FFF0</div>
<div class="m g" style="left:1012px;top:732px;">00000000</div>
<div class="m g" style="left:952px;top:741px;">0012FFF4</div>
<div class="m g" style="left:1012px;top:741px;">00000000</div>
<div class="m g" style="left:952px;top:750px;">0012FFF8</div>
<div class="m g" style="left:1012px;top:750px;">004010D1</div>
<div class="m g" style="left:1066px;top:750px;">kdHelp.&lt;ModuleEntryPoint&gt;</div>
<div class="m g" style="left:952px;top:759px;">0012FFFC</div>
<div class="m g" style="left:1012px;top:759px;">00000000</div>
<div class="a" style="left:1002px;top:633px;width:1px;height:188px;background:#808080"></div>
<div class="a" style="left:1062px;top:633px;width:1px;height:188px;background:#808080"></div>
<div class="sb" style="left:1257px;top:633px;height:188px"><div class="sbb" style="top:0"><svg width="13" height="14" style="display:block"><path d="M2.5 9 L6.5 5 L10.5 9" fill="none" stroke="#4D6185" stroke-width="2.2"/></svg></div><div class="sbb" style="top:153px"><svg width="13" height="14" style="display:block"><path d="M3.5 3.5 H9.5 M3.5 5.5 H9.5 M3.5 7.5 H9.5 M3.5 9.5 H9.5" stroke="#EEF4FE" stroke-width="1"/><path d="M4 4.5 H10 M4 6.5 H10 M4 8.5 H10 M4 10.5 H10" stroke="#8CB0F8" stroke-width="1"/></svg></div><div class="sbb" style="top:171px"><svg width="13" height="14" style="display:block"><path d="M2.5 5 L6.5 9 L10.5 5" fill="none" stroke="#4D6185" stroke-width="2.2"/></svg></div></div>
<div class="a" style="left:0px;top:823px;width:1276px;height:19px;background:#C0C0C0"></div>
<div class="a" style="left:0px;top:823px;width:1276px;height:1px;background:#fff"></div>
<div class="a" style="left:1px;top:825px;width:1176px;height:15px;border:1px solid;border-color:#808080 #fff #fff #808080;"></div>
<div class="a" style="left:1181px;top:825px;width:26px;height:15px;border:1px solid;border-color:#808080 #fff #fff #808080;"></div>
<div class="a" style="left:1211px;top:826px;width:64px;height:16px;background:#FFFF00"></div>
<div class="a" style="left:1210px;top:825px;width:64px;height:15px;border:1px solid;border-color:#808080 #fff #fff #808080;"></div>
<div class="a" id="st1" style="-webkit-text-stroke:0.2px;left:5px;top:827px;font-size:12px;line-height:14px;color:#000;white-space:pre;transform-origin:0 0;transform:scaleX(0.858)">Program entry point</div>
<div class="a" id="st2" style="left:1215px;top:827px;font-size:12px;line-height:14px;color:#E02000;white-space:pre;transform-origin:0 0;transform:scaleX(0.865)">Paused</div>
<svg class="a" style="left:0;top:570px" width="260" height="60"><ellipse cx="127" cy="30.1" rx="123.2" ry="21.2" fill="none" stroke="#C4102C" stroke-width="1.2"/></svg>
</div></body></html>
